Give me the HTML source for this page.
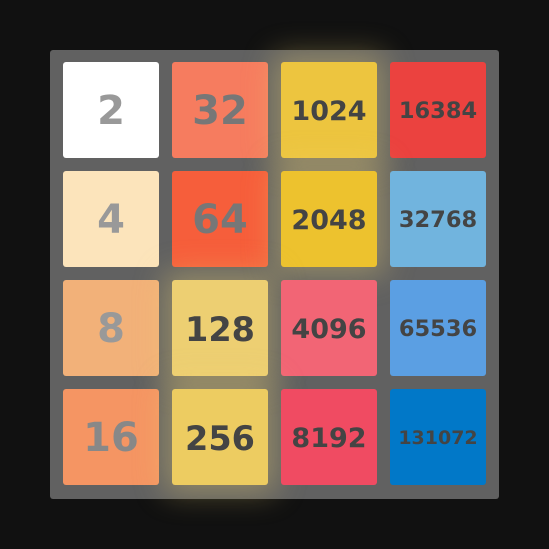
<!DOCTYPE html><html><head><style>
body{margin:0;background:#111;width:549px;height:549px;overflow:hidden;font-family:"DejaVu Sans","Liberation Sans",sans-serif}
#b{position:absolute;left:50px;top:50px;width:449px;height:449px;background:#616161;border-radius:3px}
.t{position:absolute;width:96px;height:96px;border-radius:3px;display:flex;align-items:center;justify-content:center;font-weight:bold;color:#444;padding-top:2px;box-sizing:border-box}
.g{box-shadow:0 0 30px 8px rgba(243,215,116,.35)}
</style></head><body><div id="b"></div>
<div class="t" style="left:63px;top:62px;background:#fff;color:#999;font-size:40px">2</div>
<div class="t" style="left:172px;top:62px;background:#f67c5f;color:#777;font-size:40px">32</div>
<div class="t g" style="left:281px;top:62px;background:#edc53f;font-size:27px">1024</div>
<div class="t" style="left:390px;top:62px;background:#eb423f;font-size:22.5px">16384</div>
<div class="t" style="left:63px;top:171px;background:#fce4bb;color:#999;font-size:40px">4</div>
<div class="t" style="left:172px;top:171px;background:#f65e3b;color:#777;font-size:40px">64</div>
<div class="t g" style="left:281px;top:171px;background:#edc22e;font-size:27px">2048</div>
<div class="t" style="left:390px;top:171px;background:#71b4de;font-size:22.5px">32768</div>
<div class="t" style="left:63px;top:280px;background:#f2b179;color:#999;font-size:40px">8</div>
<div class="t g" style="left:172px;top:280px;background:#edcf72;font-size:33.5px">128</div>
<div class="t" style="left:281px;top:280px;background:#f26575;font-size:27px">4096</div>
<div class="t" style="left:390px;top:280px;background:#5b9fe3;font-size:22.5px">65536</div>
<div class="t" style="left:63px;top:389px;background:#f59563;color:#888;font-size:40px">16</div>
<div class="t g" style="left:172px;top:389px;background:#edcc61;font-size:33.5px">256</div>
<div class="t" style="left:281px;top:389px;background:#f04b62;font-size:27px">8192</div>
<div class="t" style="left:390px;top:389px;background:#0178c8;font-size:19px">131072</div>
</body></html>
